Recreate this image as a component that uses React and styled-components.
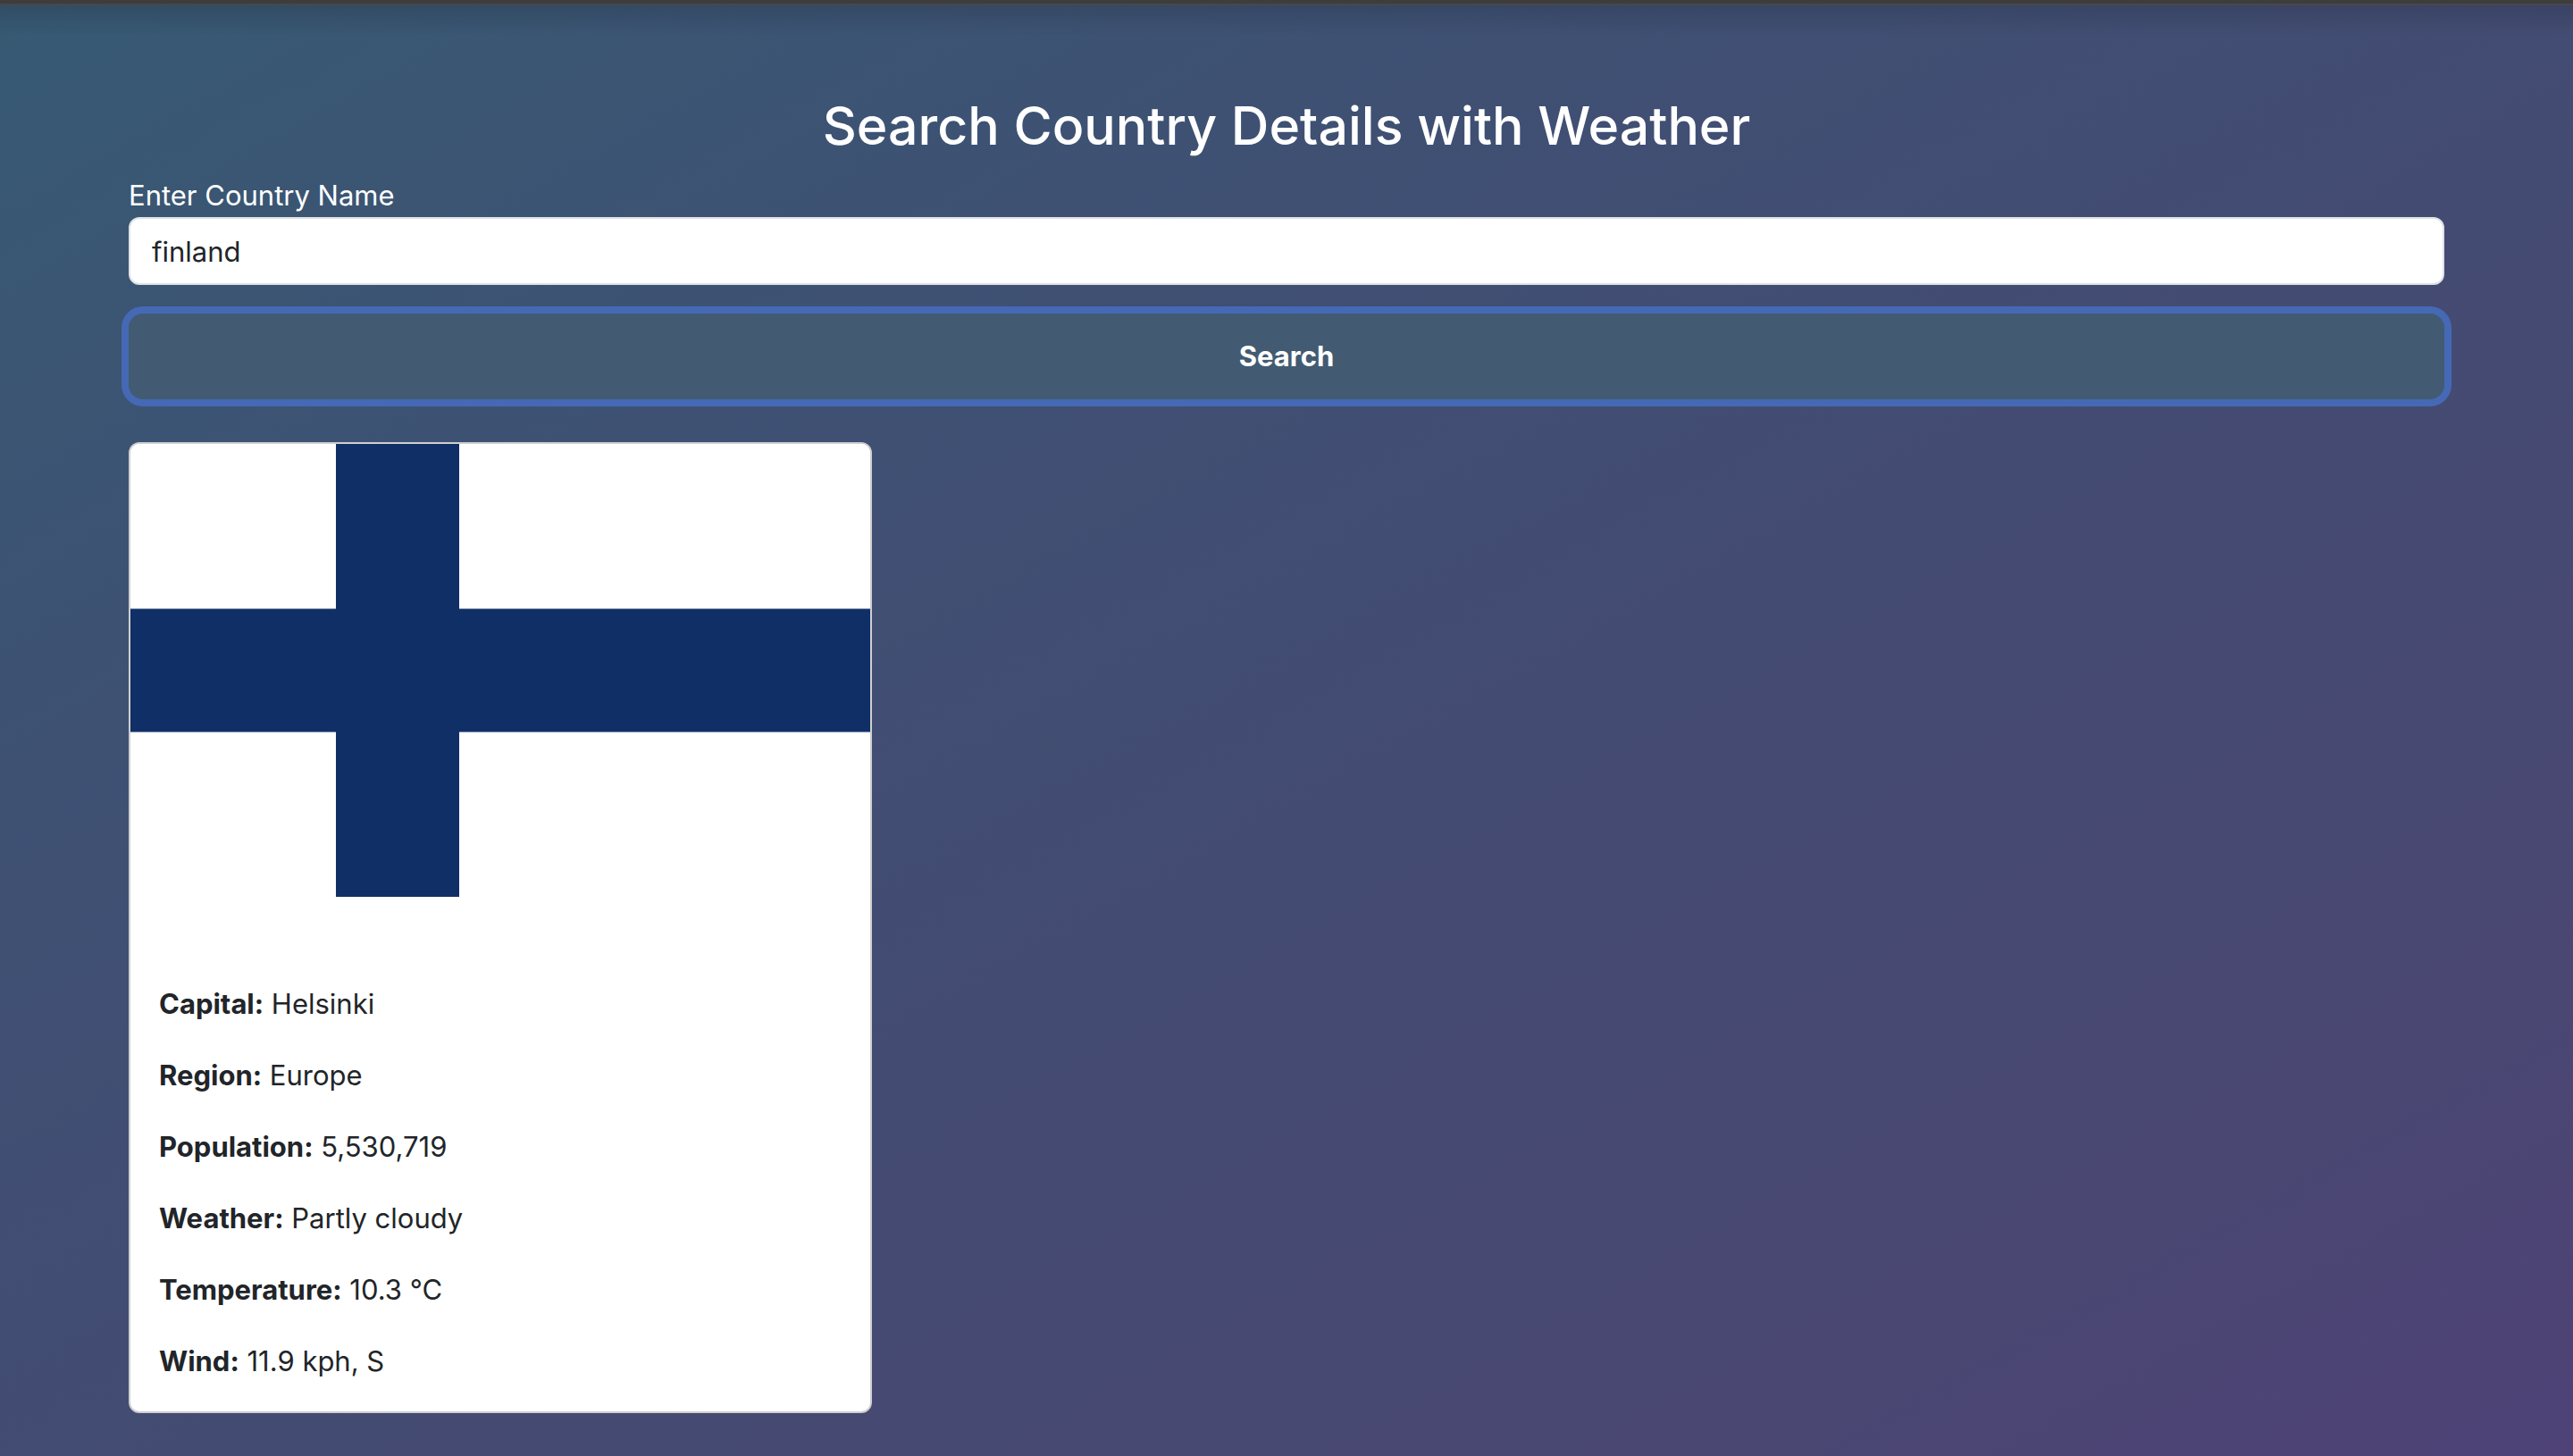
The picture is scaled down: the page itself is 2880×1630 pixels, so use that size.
import React, { useState } from "react";
import styled, { createGlobalStyle } from "styled-components";

const GlobalStyle = createGlobalStyle`
  *, *::before, *::after { box-sizing: border-box; }
  body {
    margin: 0;
    font-family: Inter, "Liberation Sans", sans-serif;
    font-size: 31px;
    line-height: 48px;
    color: #212529;
  }
`;

const Page = styled.div`
  min-height: 100vh;
  border-top: 4px solid #3d3d3d;
  background:
    linear-gradient(#484848 2px, rgba(32, 40, 60, 0.25) 2px, rgba(32, 40, 60, 0) 36px),
    linear-gradient(to bottom right, #375a73 0%, #3b5573 14%, #3f5073 31%, #444b72 56%, #494872 80%, #4e4276 100%);
`;

const Container = styled.main`
  width: 90%;
  margin: 0 auto;
  padding: 99px 0 48px;
`;

const Title = styled.h1`
  margin: 0 0 16px;
  font-size: 59px;
  font-weight: 500;
  line-height: 76px;
  text-align: center;
  color: #fff;
`;

const Form = styled.form`
  display: flex;
  flex-direction: column;
`;

const Label = styled.label`
  color: #fff;
`;

const TextInput = styled.input`
  width: 100%;
  height: 76px;
  padding: 12px 24px;
  border: 2px solid #dee2e6;
  border-radius: 12px;
  background: #fff;
  color: #212529;
  font: inherit;
  outline: none;
`;

const SearchButton = styled.button`
  width: 100%;
  height: 96px;
  margin-top: 32px;
  border: 0;
  border-radius: 16px;
  background: #425b72;
  box-shadow: 0 0 0 8px #4569b5;
  color: #fff;
  font: inherit;
  font-weight: 700;
  cursor: pointer;
`;

const Results = styled.section`
  display: grid;
  grid-template-columns: repeat(3, 1fr);
  gap: 48px;
  margin-top: 48px;
`;

const Card = styled.article`
  overflow: hidden;
  border: 2px solid #cfcfd1;
  border-radius: 12px;
  background: #fff;
`;

const Flag = styled.svg`
  display: block;
  width: 100%;
  aspect-ratio: 828 / 507;
`;

const CardBody = styled.div`
  display: grid;
  gap: 32px;
  padding: 96px 32px 32px;
`;

const Detail = styled.p`
  margin: 0;
`;

const details = [
  ["Capital", "Helsinki"],
  ["Region", "Europe"],
  ["Population", "5,530,719"],
  ["Weather", "Partly cloudy"],
  ["Temperature", "10.3 °C"],
  ["Wind", "11.9 kph, S"],
];

function FinlandFlag() {
  return (
    <Flag viewBox="0 0 828 507" role="img" aria-label="Flag of Finland">
      <rect width="828" height="507" fill="#fff" />
      <path d="M230 0h138v507h-138zM0 184.500h828v138H0z" fill="#112f67" />
    </Flag>
  );
}

export default function App() {
  const [country, setCountry] = useState("finland");
  return (
    <Page>
      <GlobalStyle />
      <Container>
        <Title>Search Country Details with Weather</Title>
        <Form onSubmit={(e) => e.preventDefault()}>
          <Label htmlFor="country">Enter Country Name</Label>
          <TextInput
            id="country"
            type="text"
            value={country}
            onChange={(e) => setCountry(e.target.value)}
          />
          <SearchButton type="submit">Search</SearchButton>
        </Form>
        <Results>
          <Card>
            <FinlandFlag />
            <CardBody>
              {details.map(([name, value]) => (
                <Detail key={name}>
                  <strong>{name}:</strong> {value}
                </Detail>
              ))}
            </CardBody>
          </Card>
        </Results>
      </Container>
    </Page>
  );
}
